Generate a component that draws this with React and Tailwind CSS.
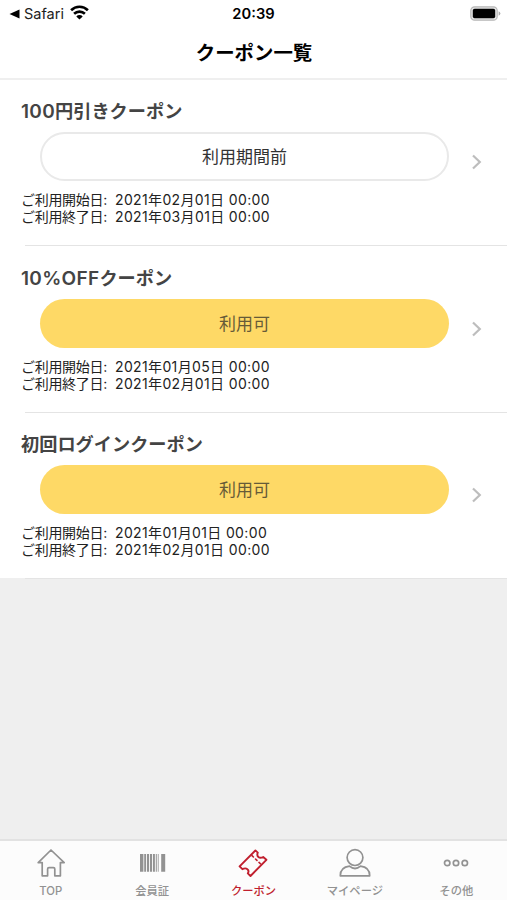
import { useState } from "react";

const coupons = [
  {
    prefix: "100",
    name: "円引きクーポン",
    status: "利用期間前",
    usable: false,
    start: "2021年02月01日 00:00",
    end: "2021年03月01日 00:00",
  },
  {
    prefix: "10%OFF",
    name: "クーポン",
    status: "利用可",
    usable: true,
    start: "2021年01月05日 00:00",
    end: "2021年02月01日 00:00",
  },
  {
    prefix: "",
    name: "初回ログインクーポン",
    status: "利用可",
    usable: true,
    start: "2021年01月01日 00:00",
    end: "2021年02月01日 00:00",
  },
];

const iconProps = {
  width: 34,
  height: 32,
  viewBox: "0 0 34 32",
  fill: "none",
  stroke: "currentColor",
  strokeWidth: 1.7,
  strokeLinejoin: "round",
  strokeLinecap: "round",
};

function HomeIcon() {
  return (
    <svg {...iconProps}>
      <path d="M17 3 L4.2 15.6 H8.2 V28.8 H13.6 V22 Q13.6 20.6 15 20.6 H19.4 Q20.8 20.6 20.8 22 V28.8 H26.4 V15.6 H30.2 Z" />
    </svg>
  );
}

function BarcodeIcon() {
  return (
    <svg {...iconProps} fill="currentColor" stroke="none">
      <path d="M5 7h3.4v17.8H5zM9.2 7h1.9v17.8H9.2zM12 7h2.1v17.8h-2.1zM15 7h2.1v17.8h-2.1zM18 7h1.9v17.8H18zM20.8 7h1v17.8h-1zM22.8 7h.8v17.8h-.8zM26.2 7h4v17.8h-4z" />
    </svg>
  );
}

function TicketIcon() {
  return (
    <svg {...iconProps} strokeWidth={1.9}>
      <path d="M3.6 19.4 L19.4 3.4 L21.8 5.6 Q20.6 8.4 22.4 10 Q24.2 11.6 27.2 10 L30.4 12.8 L14.5 29 L11.8 26.4 Q13.4 23.8 11.4 22.2 Q9.4 20.6 6.4 22.2 Z" />
      <path d="M16 8.6 L24.4 16.8" strokeWidth={1.6} strokeDasharray="2 2.9" />
    </svg>
  );
}

function UserIcon() {
  return (
    <svg {...iconProps}>
      <circle cx="17" cy="10.6" r="7.9" />
      <path d="M11.5 19.2 Q2.3 20.2 2.3 28.8 H31.7 Q31.7 20.2 22.5 19.2 Q17 23.8 11.5 19.2 Z" />
    </svg>
  );
}

function DotsIcon() {
  return (
    <svg {...iconProps}>
      <circle cx="8.2" cy="16" r="2.7" />
      <circle cx="17" cy="16" r="2.7" />
      <circle cx="25.8" cy="16" r="2.7" />
    </svg>
  );
}

const tabs = [
  { id: "top", label: "TOP", Icon: HomeIcon },
  { id: "card", label: "会員証", Icon: BarcodeIcon },
  { id: "coupon", label: "クーポン", Icon: TicketIcon },
  { id: "mypage", label: "マイページ", Icon: UserIcon },
  { id: "other", label: "その他", Icon: DotsIcon },
];

function StatusBar() {
  return (
    <div className="grid h-[27px] grid-cols-3 items-center pl-[9px] pr-[6px]">
      <div className="flex items-center text-[14.5px] text-[#222]">
        <svg width="11" height="10" viewBox="0 0 11 10" className="mr-1">
          <path d="M10.5 .5v9L.5 5z" fill="#000" />
        </svg>
        <span>Safari</span>
        <svg width="19" height="15" viewBox="0 0 19 15" className="ml-1.5 -mt-0.5" fill="none" stroke="#000" strokeWidth="2.6">
          <path d="M1.1 5.2a12 12 0 0 1 16.8 0M4.1 8.8a7.8 7.8 0 0 1 10.8 0" />
          <path d="M9.5 14.5 6.3 11.4a4.6 4.6 0 0 1 6.4 0z" fill="#000" stroke="none" />
        </svg>
      </div>
      <div className="-ml-[3px] pt-px text-center text-[14.7px] font-semibold">20:39</div>
      <div className="flex justify-end">
        <svg width="31" height="15" viewBox="0 0 31 15">
          <rect x=".8" y=".8" width="26.4" height="13.4" rx="3.8" fill="#e4e4e4" stroke="#b7b7b7" strokeWidth="1.2" />
          <rect x="2.8" y="2.8" width="22.4" height="9.4" rx="1.8" fill="#000" />
          <path d="M28.6 5.2q1.8.7 1.8 2.3t-1.8 2.3z" fill="#aaa" />
        </svg>
      </div>
    </div>
  );
}

function CouponRow({ coupon }) {
  return (
    <li className="h-[166.5px] bg-white last:bg-transparent">
      <div className="flex h-[165px] flex-col bg-white pl-[21px] pt-[18px]">
        <h2 className="h-[26px] text-[18.2px] leading-[26px] font-semibold whitespace-nowrap text-[#444]">
          <span className="text-[19px] tracking-[0.3px]">{coupon.prefix}</span>
          {coupon.name}
        </h2>
        <div className="mt-[8px] flex items-center">
          <button
            className={
              coupon.usable
                ? "ml-[19px] h-[49px] w-[409px] rounded-full bg-[#fed966] pt-[3px] text-[17px] text-[#665b38]"
                : "ml-[19px] h-[49px] w-[409px] rounded-full border-2 border-[#e9e9e9] bg-white pt-[3px] text-[17px] text-[#333]"
            }
          >
            {coupon.status}
          </button>
          <svg width="12" height="16" viewBox="0 0 12 16" className="ml-[22px] mt-[11px]" fill="none" stroke="#bdbdbd" strokeWidth="2.2">
            <path d="M2 1.5 8.8 8 2 14.5" />
          </svg>
        </div>
        <dl className="mt-[10px] text-[14px] leading-[17px] whitespace-nowrap text-[#222]">
          <div className="flex">
            <dt className="w-[94px] tracking-[-0.3px]">ご利用開始日:</dt>
            <dd className="tracking-[0.36px]">{coupon.start}</dd>
          </div>
          <div className="flex">
            <dt className="w-[94px] tracking-[-0.3px]">ご利用終了日:</dt>
            <dd className="tracking-[0.36px]">{coupon.end}</dd>
          </div>
        </dl>
      </div>
      <div className="ml-[25px] h-px bg-[#e4e4e4]" />
    </li>
  );
}

function App() {
  const [active, setActive] = useState("coupon");

  return (
    <div className="flex h-[900px] w-[507px] flex-col overflow-hidden bg-[#efefef] font-[Inter,'Noto_Sans_CJK_JP',sans-serif] text-black">
      <header className="h-[80px] shrink-0 border-b-2 border-[#efefef] bg-white">
        <StatusBar />
        <h1 className="pt-px pl-px text-center text-[19.4px] leading-[50px] font-bold">クーポン一覧</h1>
      </header>
      <ul className="flex-1">
        {coupons.map((coupon) => (
          <CouponRow key={coupon.status + coupon.name} coupon={coupon} />
        ))}
      </ul>
      <nav className="grid h-[61px] shrink-0 grid-cols-5 border-t-2 border-[#e2e2e2] bg-[#fcfcfc]">
        {tabs.map(({ id, label, Icon }) => (
          <button
            key={id}
            onClick={() => setActive(id)}
            className={
              active === id
                ? "flex flex-col items-center pt-[6px] text-[#c01f2e]"
                : "flex flex-col items-center pt-[6px] text-[#929292]"
            }
          >
            <Icon />
            <span className="mt-[4px] text-[11.3px] leading-[16px] font-medium whitespace-nowrap">{label}</span>
          </button>
        ))}
      </nav>
    </div>
  );
}

export default App;
